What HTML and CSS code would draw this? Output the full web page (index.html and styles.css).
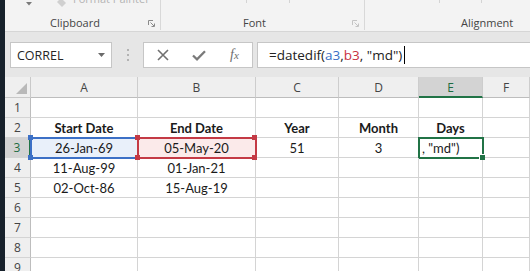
FILE: index.html
```html
<!DOCTYPE html>
<html lang="en">
<head>
  <meta charset="UTF-8" />
  <meta name="viewport" content="width=device-width, initial-scale=1.0"/>
  <title>datedif</title>
  <link rel="stylesheet" href="styles.css">
</head>
<body>
  <div class="edge"></div>

  <div class="app">
    <!-- ribbon, cut off at the top -->
    <div class="ribbon">
      <div class="group clipboard">
        <div class="tools">
          <svg class="drop" width="6" height="4" viewBox="0 0 6 4"><path d="M0 0H6L3 3.5Z" fill="#7a7a7a"/></svg>
          <svg class="brush" width="10" height="8" viewBox="0 0 10 8"><path d="M0 2L4 -2L9 3L5 7Z" fill="#d0d0d0"/></svg>
          <span class="painter">Format Painter</span>
        </div>
        <div class="label-row">
          <span class="label">Clipboard</span>
          <svg class="launcher" width="7" height="7" viewBox="0 0 7 7"><path d="M0.5 5V0.5H5M2.5 2.5L6 6M6.5 3.5V6.5H3.5" fill="none" stroke="#8a8a8a"/></svg>
        </div>
      </div>
      <div class="group font">
        <div class="tools">
          <span class="tick t1"></span>
          <span class="tick t2"></span>
        </div>
        <div class="label-row">
          <span class="label">Font</span>
          <svg class="launcher" width="7" height="7" viewBox="0 0 7 7"><path d="M0.5 5V0.5H5M2.5 2.5L6 6M6.5 3.5V6.5H3.5" fill="none" stroke="#c4c4c4"/></svg>
        </div>
      </div>
      <div class="group align">
        <div class="tools">
          <span class="tick t3"></span>
          <span class="tick t4"></span>
        </div>
        <div class="label-row">
          <span class="label">Alignment</span>
        </div>
      </div>
    </div>

    <!-- name box + formula bar -->
    <div class="formula-bar">
      <div class="name-box">
        <span>CORREL</span>
        <svg width="7" height="4" viewBox="0 0 7 4"><path d="M0 0H7L3.5 4Z" fill="#6a6a6a"/></svg>
      </div>
      <div class="grip"><i></i><i></i><i></i></div>
      <div class="fx-buttons">
        <svg width="12" height="12" viewBox="0 0 12 12"><path d="M1 1L11 11M11 1L1 11" stroke="#707070" stroke-width="1.6"/></svg>
        <svg width="14" height="11" viewBox="0 0 14 11"><path d="M1 5.5L5 9.3L13 1.2" fill="none" stroke="#7a7a7a" stroke-width="2.3"/></svg>
        <span class="fx">f<span class="fx-x">x</span></span>
      </div>
      <div class="formula-input">=datedif(<span class="ref-a">a3</span>,<span class="ref-b">b3</span>, "md")<span class="cursor"></span></div>
    </div>

    <!-- worksheet -->
    <div class="sheet">
      <div class="corner"><span class="tri"></span></div>
      <div class="col-head">A</div>
      <div class="col-head">B</div>
      <div class="col-head">C</div>
      <div class="col-head">D</div>
      <div class="col-head active">E</div>
      <div class="col-head">F</div>

      <div class="row-head">1</div>
      <div class="cell"></div><div class="cell"></div><div class="cell"></div><div class="cell"></div><div class="cell"></div><div class="cell"></div>

      <div class="row-head">2</div>
      <div class="cell bold">Start Date</div>
      <div class="cell bold">End Date</div>
      <div class="cell bold">Year</div>
      <div class="cell bold">Month</div>
      <div class="cell bold">Days</div>
      <div class="cell"></div>

      <div class="row-head active">3</div>
      <div class="cell range-a">26-Jan-69</div>
      <div class="cell range-b">05-May-20</div>
      <div class="cell">51</div>
      <div class="cell">3</div>
      <div class="cell editing">, "md")</div>
      <div class="cell"></div>

      <div class="row-head">4</div>
      <div class="cell">11-Aug-99</div>
      <div class="cell">01-Jan-21</div>
      <div class="cell"></div><div class="cell"></div><div class="cell"></div><div class="cell"></div>

      <div class="row-head">5</div>
      <div class="cell">02-Oct-86</div>
      <div class="cell">15-Aug-19</div>
      <div class="cell"></div><div class="cell"></div><div class="cell"></div><div class="cell"></div>

      <div class="row-head">6</div>
      <div class="cell"></div><div class="cell"></div><div class="cell"></div><div class="cell"></div><div class="cell"></div><div class="cell"></div>
      <div class="row-head">7</div>
      <div class="cell"></div><div class="cell"></div><div class="cell"></div><div class="cell"></div><div class="cell"></div><div class="cell"></div>
      <div class="row-head">8</div>
      <div class="cell"></div><div class="cell"></div><div class="cell"></div><div class="cell"></div><div class="cell"></div><div class="cell"></div>
      <div class="row-head">9</div>
      <div class="cell"></div><div class="cell"></div><div class="cell"></div><div class="cell"></div><div class="cell"></div><div class="cell"></div>
    </div>
  </div>
</body>
</html>
```

FILE: styles.css
```css
body {
  margin: 0;
  padding: 0;
  height: 271px;
  overflow: hidden;
  display: flex;
  font-family: "Open Sans", "Noto Sans", sans-serif;
  color: #222;
}

.edge {
  width: 5px;
  flex: none;
  background-color: #17212b;
}

.app {
  flex: 1;
  display: flex;
  flex-direction: column;
  min-width: 0;
}

/* Ribbon */
.ribbon {
  height: 31px;
  flex: none;
  display: flex;
  background-color: #f3f3f3;
  border-bottom: 1px solid #d6d6d6;
  overflow: hidden;
}

.group {
  height: 30px;
  display: flex;
  flex-direction: column;
  box-sizing: border-box;
}

.clipboard {
  width: 156px;
  border-right: 1px solid #d8d8d8;
}

.font {
  width: 204px;
  border-right: 1px solid #d8d8d8;
}

.align {
  flex: 1;
}

.tools {
  height: 16px;
  display: flex;
  align-items: flex-start;
}

.drop {
  margin: 2px 0 0 21px;
}

.brush {
  margin: 0 0 0 25px;
}

.painter {
  margin: -9px 0 0 6px;
  font-size: 11px;
  line-height: 15px;
  color: #b4b4b4;
}

.tick {
  width: 1px;
  height: 3px;
  background-color: #d4d4d4;
}

.t1 { margin-left: 85px; }
.t2 { margin-left: 42px; }
.t3 { margin-left: 74px; }
.t4 { margin-left: 41px; }

.label-row {
  height: 14px;
  display: flex;
  align-items: center;
  padding-right: 5px;
}

.label {
  font-size: 11px;
  color: #444;
  line-height: 14px;
}

.clipboard .label { margin-left: 45px; }
.font .label { margin-left: 82px; }
.align .label { margin-left: 96px; }

.launcher {
  margin-left: auto;
  margin-top: 1px;
}

/* Formula bar */
.formula-bar {
  height: 45px;
  flex: none;
  display: flex;
  align-items: flex-start;
  padding-top: 10px;
  box-sizing: border-box;
  background-color: #e6e6e6;
}

.name-box,
.fx-buttons,
.formula-input {
  height: 26px;
  box-sizing: border-box;
  background-color: #fff;
  border: 1px solid #c6c6c6;
  display: flex;
  align-items: center;
}

.name-box {
  width: 102px;
  margin-left: 5px;
  padding: 0 6px 0 6px;
  justify-content: space-between;
  font-size: 12.5px;
  color: #262626;
}

.grip {
  width: 31px;
  height: 26px;
  display: flex;
  flex-direction: column;
  align-items: center;
  justify-content: center;
  gap: 3px;
}

.grip i {
  width: 2px;
  height: 2px;
  background-color: #b3b3b3;
}

.fx-buttons {
  width: 110px;
  padding-left: 13px;
  gap: 23px;
}

.fx {
  font-family: "Liberation Serif", serif;
  font-style: italic;
  font-size: 14px;
  color: #6e6e6e;
  margin-left: 1px;
}

.fx-x {
  font-size: 11px;
}

.formula-input {
  flex: 1;
  margin-left: 4px;
  margin-right: -4px;
  padding-left: 11px;
  font-size: 13.5px;
  color: #222;
  white-space: nowrap;
}

.ref-a { color: #3a6fc6; }
.ref-b { color: #c8323f; }

.cursor {
  width: 1px;
  height: 18px;
  margin-left: 2px;
  background-color: #000;
}

/* Worksheet */
.sheet {
  flex: 1;
  display: grid;
  grid-template-columns: 26px 107px 118px 83px 80px 64px 1fr;
  grid-template-rows: 21px;
  grid-auto-rows: 20px;
  background-color: #fff;
  overflow: hidden;
}

.corner,
.col-head,
.row-head {
  background-color: #efefef;
  box-sizing: border-box;
  font-size: 12px;
  color: #444;
  display: flex;
  align-items: center;
  justify-content: center;
}

.corner {
  border-right: 1px solid #c9c9c9;
  border-bottom: 1px solid #c9c9c9;
  position: relative;
}

.tri {
  position: absolute;
  right: 3px;
  bottom: 3px;
  width: 0;
  height: 0;
  border-left: 11px solid transparent;
  border-bottom: 11px solid #b9b9b9;
}

.col-head {
  border-right: 1px solid #cdcdcd;
  border-bottom: 1px solid #bdbdbd;
  padding-top: 1px;
}

.col-head.active {
  background-color: #d3d3d3;
  color: #1e6b41;
  border-bottom: 2px solid #217346;
  padding-top: 2px;
}

.row-head {
  border-right: 1px solid #bdbdbd;
  border-bottom: 1px solid #d4d4d4;
}

.row-head.active {
  background-color: #d3d3d3;
  color: #1e6b41;
  border-right: 2px solid #217346;
}

.cell {
  box-sizing: border-box;
  border-right: 1px solid #d4d4d4;
  border-bottom: 1px solid #d4d4d4;
  font-family: "Lato", "Liberation Sans", sans-serif;
  font-size: 13px;
  color: #1a1a1a;
  display: flex;
  align-items: center;
  justify-content: center;
  white-space: nowrap;
  position: relative;
}

.bold {
  font-weight: bold;
}

.range-a {
  background-color: #e9f0fa;
  outline: 2px solid #3c70c6;
  outline-offset: -1px;
}

.range-b {
  background-color: #fbeaea;
  outline: 2px solid #c43a45;
  outline-offset: -1px;
}

.range-a::before,
.range-b::before {
  content: "";
  position: absolute;
  left: -3px;
  top: -3px;
  width: 5px;
  height: 5px;
  z-index: 2;
}

.range-a::before {
  background-color: #3c70c6;
  box-shadow: 0 20px 0 #3c70c6;
}

.range-b::before {
  background-color: #c43a45;
  box-shadow: 117px 0 0 #c43a45, 0 20px 0 #c43a45, 117px 20px 0 #c43a45;
}

.editing {
  justify-content: flex-start;
  padding-left: 3px;
  outline: 2px solid #217346;
  outline-offset: -1px;
  overflow: visible;
}

.editing::after {
  content: "";
  position: absolute;
  right: -3px;
  bottom: -3px;
  width: 5px;
  height: 5px;
  background-color: #217346;
  border-left: 1px solid #fff;
  border-top: 1px solid #fff;
  z-index: 2;
}
```
